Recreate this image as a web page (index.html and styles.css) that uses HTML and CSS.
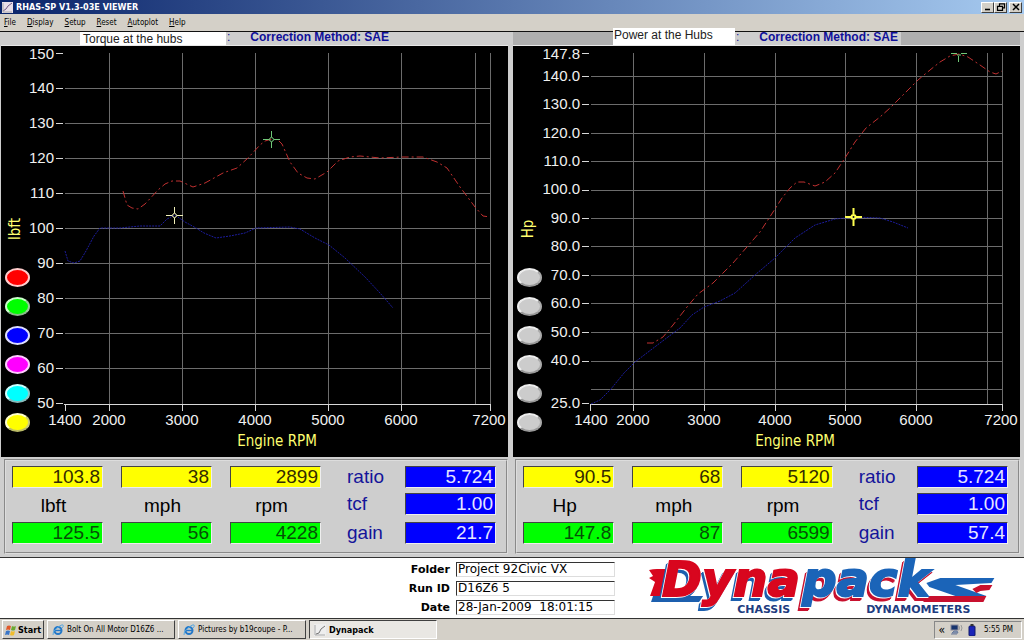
FILE: index.html
```html
<!DOCTYPE html>
<html lang="en">
<head>
<meta charset="utf-8">
<title>RHAS-SP V1.3-03E VIEWER</title>
<link rel="stylesheet" href="styles.css">
</head>
<body>
<header class="titlebar">
  <svg class="app-icon" width="11" height="11" viewBox="0 0 11 11" aria-hidden="true"><rect width="11" height="11" fill="#e9dfe9"/><path d="M1 9l3-2 2-3 4-3" stroke="#765a86" fill="none"/><path d="M1 1v9h9" stroke="#aaa" fill="none"/></svg>
  <h1 class="title">RHAS-SP V1.3-03E VIEWER</h1>
  <button class="win-btn" aria-label="Minimize"><svg width="10" height="8" viewBox="0 0 10 8"><path d="M2 6.5h5" stroke="#000" stroke-width="1.6"/></svg></button>
  <button class="win-btn" aria-label="Restore"><svg width="10" height="8" viewBox="0 0 10 8"><path d="M3.5 3V.8h5v4H7M1.500 3.300h5v4h-5z" stroke="#000" stroke-width="1.200" fill="none"/></svg></button>
  <button class="win-btn win-close" aria-label="Close"><svg width="10" height="8" viewBox="0 0 10 8"><path d="M2 1l6 6M8 1L2 7" stroke="#000" stroke-width="1.500"/></svg></button>
</header>
<nav class="menubar">
  <button class="menu"><u>F</u>ile</button>
  <button class="menu"><u>D</u>isplay</button>
  <button class="menu"><u>S</u>etup</button>
  <button class="menu"><u>R</u>eset</button>
  <button class="menu"><u>A</u>utoplot</button>
  <button class="menu"><u>H</u>elp</button>
</nav>

<main class="panels">
  <section class="panel">
    <div class="panel-head">
      <h2 class="caption">Torque at the hubs</h2>
      <p class="method"><span>:</span><strong>Correction Method: SAE</strong></p>
    </div>
    <div class="chart">
      <svg class="plot" viewBox="1 46 507 411" role="img" aria-label="Torque in lbft against engine RPM">
        <path class="grid" d="M109.500 53V404M182.500 53V404M255.500 53V404M328.500 53V404M401.500 53V404M475.500 53V404M490.500 53V404M65 88.500H490M65 123.500H490M65 158.500H490M65 193.500H490M65 228.500H490M65 263.500H490M65 298.500H490M65 333.500H490M65 368.500H490"/>
        <path class="axis" d="M64 404.500H491M65.500 404v7M109.500 404v7M182.500 404v7M255.500 404v7M328.500 404v7M401.500 404v7M490.500 404v7M56 53.500h7M56 88.500h7M56 123.500h7M56 158.500h7M56 193.500h7M56 228.500h7M56 263.500h7M56 298.500h7M56 333.500h7M56 368.500h7M56 403.500h7"/>
        <g class="ticks ticks-y">
          <text x="54" y="59">150</text><text x="54" y="93">140</text><text x="54" y="128">130</text><text x="54" y="163">120</text><text x="54" y="198">110</text><text x="54" y="233">100</text><text x="54" y="268">90</text><text x="54" y="303">80</text><text x="54" y="338">70</text><text x="54" y="373">60</text><text x="54" y="408">50</text>
        </g>
        <g class="ticks ticks-x">
          <text x="65" y="425">1400</text><text x="109" y="425">2000</text><text x="182" y="425">3000</text><text x="255" y="425">4000</text><text x="328" y="425">5000</text><text x="401" y="425">6000</text><text x="489" y="425">7200</text>
        </g>
        <text class="axis-name" x="277" y="446">Engine RPM</text>
        <text class="axis-name" transform="translate(20 229) rotate(-90)">lbft</text>
        <polyline class="run-blue" points="65,251 68,261 74,263 80,261 86,251 94,236 100,228 120,228 140,226 160,226 167,219 175,215 185,222 196,228 204,233 216,238 230,236 245,233 256,228 290,227 300,229 315,238 329,245 345,258 365,277 380,293 393,308"/>
        <polyline class="run-red" points="123,191 127,205 132,208 138,209 145,204 158,190 165,184 172,181 180,181 193,187 205,183 223,173 237,168 248,158 260,145 265,141 272,139 278,140 282,144 290,162 298,173 307,178 315,179 327,172 338,161 350,157 360,156 380,158 402,157 423,157 437,162 447,168 460,187 475,207 483,216 490,217"/>
        <g class="mark-green"><circle cx="271.500" cy="139.500" r="2"/><path d="M263 139.500h6M274 139.500h6M271.500 131v6M271.500 142v6"/></g>
        <g class="mark-pale"><circle cx="174.500" cy="215.500" r="2"/><path d="M166 215.500h6M177 215.500h6M174.500 207v6M174.500 218v6"/></g>
      </svg>
      <div class="runs">
        <button class="run red" aria-label="Run 1"></button>
        <button class="run green" aria-label="Run 2"></button>
        <button class="run blue" aria-label="Run 3"></button>
        <button class="run magenta" aria-label="Run 4"></button>
        <button class="run cyan" aria-label="Run 5"></button>
        <button class="run yellow" aria-label="Run 6"></button>
      </div>
    </div>
    <div class="readout">
      <input class="val v-yellow" id="t1" value="103.8" readonly>
      <input class="val v-yellow" id="t2" value="38" readonly>
      <input class="val v-yellow" id="t3" value="2899" readonly>
      <label class="side" for="t4">ratio</label>
      <input class="val v-blue" id="t4" value="5.724" readonly>
      <label class="unit" for="t1">lbft</label>
      <label class="unit" for="t2">mph</label>
      <label class="unit" for="t3">rpm</label>
      <label class="side" for="t5">tcf</label>
      <input class="val v-blue" id="t5" value="1.00" readonly>
      <input class="val v-green" aria-label="Peak lbft" value="125.5" readonly>
      <input class="val v-green" aria-label="Peak mph" value="56" readonly>
      <input class="val v-green" aria-label="Peak rpm" value="4228" readonly>
      <label class="side" for="t6">gain</label>
      <input class="val v-blue" id="t6" value="21.7" readonly>
    </div>
  </section>

  <section class="panel panel-power">
    <div class="panel-head">
      <h2 class="caption">Power at the Hubs</h2>
      <p class="method"><span>:</span><strong>Correction Method: SAE</strong></p>
    </div>
    <div class="chart">
      <svg class="plot" viewBox="513 46 507 411" role="img" aria-label="Power in Hp against engine RPM">
        <path class="grid" d="M633.500 53V404M704.500 53V404M775.500 53V404M845.500 53V404M916.500 53V404M987.500 53V404M1002.500 53V404M591 76.500H1002M591 104.500H1002M591 133.500H1002M591 161.500H1002M591 190.500H1002M591 218.500H1002M591 246.500H1002M591 275.500H1002M591 303.500H1002M591 332.500H1002M591 361.500H1002M591 389.500H1002"/>
        <path class="axis" d="M590 404.500H1003M590.500 404v7M633.500 404v7M704.500 404v7M775.500 404v7M845.500 404v7M916.500 404v7M1002.500 404v7M582 53.500h7M582 76.500h7M582 104.500h7M582 133.500h7M582 161.500h7M582 190.500h7M582 218.500h7M582 246.500h7M582 275.500h7M582 303.500h7M582 332.500h7M582 361.500h7M582 403.500h7"/>
        <g class="ticks ticks-y">
          <text x="580" y="59">147.8</text><text x="580" y="81">140.0</text><text x="580" y="109">130.0</text><text x="580" y="138">120.0</text><text x="580" y="166">110.0</text><text x="580" y="194">100.0</text><text x="580" y="223">90.0</text><text x="580" y="251">80.0</text><text x="580" y="280">70.0</text><text x="580" y="308">60.0</text><text x="580" y="337">50.0</text><text x="580" y="365">40.0</text><text x="580" y="408">25.0</text>
        </g>
        <g class="ticks ticks-x">
          <text x="591" y="425">1400</text><text x="633" y="425">2000</text><text x="704" y="425">3000</text><text x="775" y="425">4000</text><text x="845" y="425">5000</text><text x="916" y="425">6000</text><text x="1001" y="425">7200</text>
        </g>
        <text class="axis-name" x="795" y="446">Engine RPM</text>
        <text class="axis-name" transform="translate(533 229) rotate(-90)">Hp</text>
        <polyline class="run-blue" points="591,404 600,400 611,389 624,373 635,362 660,343 680,328 692,315 704,307 720,301 735,293 755,275 775,258 795,238 815,225 835,219 855,217 880,218 893,222 908,228"/>
        <polyline class="run-red" points="647,343 653,343 663,337 673,325 687,307 698,294 713,283 733,263 760,232 775,209 782,198 790,188 797,182 804,182 815,186 825,182 835,173 845,158 855,142 866,128 880,117 890,108 905,93 918,80 930,70 940,62 950,56 959,54 968,57 980,65 990,72 996,74 1002,71"/>
        <g class="mark-yellow"><circle cx="853.500" cy="217" r="2"/><path d="M845 217h6M856 217h6M853.500 208v6M853.500 220v6"/></g>
        <path class="mark-green" d="M951 53.500h6M961 53.500h6M957 55h4M958.500 56v6"/>
      </svg>
      <div class="runs">
        <button class="run off" aria-label="Run 1"></button>
        <button class="run off" aria-label="Run 2"></button>
        <button class="run off" aria-label="Run 3"></button>
        <button class="run off" aria-label="Run 4"></button>
        <button class="run off" aria-label="Run 5"></button>
        <button class="run off" aria-label="Run 6"></button>
      </div>
    </div>
    <div class="readout">
      <input class="val v-yellow" id="p1" value="90.5" readonly>
      <input class="val v-yellow" id="p2" value="68" readonly>
      <input class="val v-yellow" id="p3" value="5120" readonly>
      <label class="side" for="p4">ratio</label>
      <input class="val v-blue" id="p4" value="5.724" readonly>
      <label class="unit" for="p1">Hp</label>
      <label class="unit" for="p2">mph</label>
      <label class="unit" for="p3">rpm</label>
      <label class="side" for="p5">tcf</label>
      <input class="val v-blue" id="p5" value="1.00" readonly>
      <input class="val v-green" aria-label="Peak Hp" value="147.8" readonly>
      <input class="val v-green" aria-label="Peak mph" value="87" readonly>
      <input class="val v-green" aria-label="Peak rpm" value="6599" readonly>
      <label class="side" for="p6">gain</label>
      <input class="val v-blue" id="p6" value="57.4" readonly>
    </div>
  </section>
</main>

<section class="info">
  <form class="run-form">
    <label for="folder">Folder</label><input id="folder" value="Project 92Civic VX">
    <label for="runid">Run ID</label><input id="runid" value="D16Z6 5">
    <label for="date">Date</label><input id="date" value="28-Jan-2009  18:01:15">
  </form>
  <svg class="logo" viewBox="640 557 384 60" role="img" aria-label="Dynapack Chassis Dynamometers">
    <path fill="#1c5fae" d="M653 595h50l-4 6h-48z"/>
    <path fill="#c8102e" d="M925 595h61l-3 6h-60z"/>
    <path fill="#d8061e" d="M649 569q4-1 8-1h18l-7 27h-18l5-14-6-4 4-2z"/>
    <path fill="#1b64b8" d="M926 582l14-5h54l-3 5-36 2 31 11h-31l-26-9z"/>
    <path fill="#c8102e" d="M972 588l8-4h12l-3 5-9 1-4 2z"/>
    <text class="logo-word word-red" x="662" y="595">Dyna</text>
    <text class="logo-word word-blue" x="802" y="595">pack</text>
    <text class="logo-sub" x="737" y="612">CHASSIS</text>
    <text class="logo-sub" x="866" y="612">DYNAMOMETERS</text>
  </svg>
</section>

<footer class="taskbar">
  <button class="task start"><svg width="12" height="12" viewBox="0 0 12 12"><path fill="#e2582a" d="M2 2q2-1 4 0L5 6Q3 5 1 6z"/><path fill="#6aa832" d="M7 2q2 1 4 0l-1 4Q8 7 6 6z"/><path fill="#3a76c8" d="M1 7q2-1 4 0l-1 4q-2-1-4 0z"/><path fill="#f0bd2c" d="M6 7q2 1 4 0l-1 4q-2 1-4 0z"/></svg>Start</button>
  <button class="task"><svg width="12" height="12" viewBox="0 0 12 12"><circle cx="6" cy="6.500" r="3.500" fill="none" stroke="#2478c8" stroke-width="2"/><path d="M3 6.500h7" stroke="#2478c8" stroke-width="1.500"/><path d="M1 11Q0 8 5 4T11 1q1 1-1 3" fill="none" stroke="#58a8e0"/></svg><span>Bolt On All Motor D16Z6 ...</span></button>
  <button class="task"><svg width="12" height="12" viewBox="0 0 12 12"><circle cx="6" cy="6.500" r="3.500" fill="none" stroke="#2478c8" stroke-width="2"/><path d="M3 6.500h7" stroke="#2478c8" stroke-width="1.500"/><path d="M1 11Q0 8 5 4T11 1q1 1-1 3" fill="none" stroke="#58a8e0"/></svg><span>Pictures by b19coupe - P...</span></button>
  <button class="task active"><svg width="12" height="12" viewBox="0 0 12 12"><rect width="12" height="12" fill="#eee"/><path d="M1 1v10h10" stroke="#aaa" fill="none"/><path d="M2 10l3-1 2-4 4-3" stroke="#777" fill="none"/></svg><span>Dynapack</span></button>
  <div class="tray">
    <button class="chevron" aria-label="Show hidden icons">«</button>
    <svg width="13" height="12" viewBox="0 0 13 12"><rect x="1" y="1" width="7" height="5" fill="#17346e" stroke="#889"/><path d="M4 7h3l1 2H2zM1 10h6" stroke="#68799a" fill="#8fa0b8"/><path d="M9 2q1 2 0 4M11 1q2 3 0 6" fill="none" stroke="#999"/></svg>
    <svg width="8" height="12" viewBox="0 0 8 12"><rect x="1" y="2" width="6" height="10" rx="1" fill="#1b25b8" stroke="#111a68"/><path d="M2.500 1h3" stroke="#333" stroke-width="2"/></svg>
    <time class="clock">5:55 PM</time>
  </div>
</footer>
</body>
</html>
```
FILE: styles.css
```css
* { box-sizing: border-box; }

body {
  margin: 0;
  min-height: 100vh;
  display: flex;
  flex-direction: column;
  background: #d4d0c8;
  color: #000;
  font-family: "DejaVu Sans Condensed", "DejaVu Sans", sans-serif;
  font-size: 8px;
}

button, input { font: inherit; color: inherit; margin: 0; padding: 0; border: 0; border-radius: 0; }
h1, h2, p { margin: 0; }
svg { display: block; flex: none; }

.titlebar {
  display: flex;
  align-items: center;
  height: 14px;
  padding: 0 2px;
  color: #fff;
  background: linear-gradient(90deg, #0a246a, #a6caf0);
}
.title { flex: 1; margin-left: 3px; font-size: 9px; line-height: 14px; font-weight: bold; }
.win-btn {
  display: grid;
  place-items: center;
  width: 13px;
  height: 11px;
  background: #d4d0c8;
  border: 1px solid;
  border-color: #fff #404040 #404040 #fff;
}
.win-close { margin-left: 2px; }

.menubar { display: flex; gap: 11px; height: 18px; padding: 0 4px; border-bottom: 1px solid #111; }
.menu { background: none; line-height: 16px; }

.panels {
  display: grid;
  grid-template-columns: 1fr 1fr;
  gap: 5px;
  padding: 0 4px 0 1px;
  background: #cecece;
}
.panel { min-width: 0; }
.panel-head { display: flex; height: 14px; padding-left: 79px; background: #cecece; border-bottom: 1px solid #e8e8e8; }
.caption {
  width: 146px;
  padding-left: 3px;
  background: #fff;
  color: #222;
  font: 12px/14px "Liberation Sans", Arial, sans-serif;
}
.method { display: flex; gap: 20px; padding: 0 3px 0 1px; background: #cecece; color: #10109a; font: 12px/11px "Liberation Sans", Arial, sans-serif; }
.panel-power .panel-head { padding-left: 100px; background: #afafaf; }
.panel-power .caption { width: 122px; height: 17px; margin-top: -4px; padding-left: 1px; }

.chart { position: relative; background: #000; }
.plot { width: 100%; height: auto; }
.grid { stroke: #6c6c6c; fill: none; }
.axis { stroke: #d8d8d8; fill: none; }
.ticks { fill: #f0f0f0; font: 15px "Liberation Sans", Arial, sans-serif; }
.ticks-y { text-anchor: end; }
.ticks-x { text-anchor: middle; }
.axis-name { fill: #ffff70; text-anchor: middle; font-size: 15px; }
.run-red { fill: none; stroke: #c03030; stroke-dasharray: 7 3 2 3; }
.run-blue { fill: none; stroke: #1c1c9c; stroke-dasharray: 2 1; }
.mark-green { fill: none; stroke: #70c878; }
.mark-pale { fill: none; stroke: #f0f0b8; }
.mark-yellow { fill: none; stroke: #ffff50; stroke-width: 2; }

.runs { position: absolute; left: 4px; bottom: 25px; display: flex; flex-direction: column; gap: 10px; }
.run { width: 25px; height: 19px; border: 2px solid; border-color: #fff #ddd #aaa #fff; border-radius: 50%; }
.red { background: #f00; border-color: #fcc; }
.green { background: #0f0; border-color: #cfc #9c9 #8b8 #cfc; }
.blue { background: #00f; border-color: #ddf; }
.magenta { background: #f0f; border-color: #fcf; }
.cyan { background: #0ff; border-color: #cff #8cc #8bb #cff; }
.yellow { background: #ff0; border-color: #ffc #cc7 #bb6 #ffc; }
.off { background: #ccc; border-color: #eee #aaa #999 #eee; }

.readout {
  display: grid;
  grid-template-columns: 91fr 91fr 91fr 48fr 91fr;
  gap: 5px 18px;
  margin: 2px 0 3px 3px;
  padding: 5px 10px 8px 6px;
  border: 2px groove #ddd;
  font: 19px/22px "Liberation Sans", Arial, sans-serif;
}
.panel-power .readout { margin-left: 2px; }
.val {
  width: 100%;
  min-width: 0;
  height: 22px;
  padding: 0 2px;
  line-height: 20px;
  text-align: right;
  border: 1px solid;
  border-color: #444 #eee #eee #444;
}
.v-yellow { background: #ff0; color: #332b00; }
.v-green { background: #0f0; color: #064f06; }
.v-blue { background: #00f; color: #e6e6ff; }
.unit { padding: 2px 8px 0 0; text-align: center; }
.side { padding-left: 8px; color: #14149a; }

.info {
  display: grid;
  grid-template-columns: 615fr 409fr;
  border-top: 1px solid #333;
  border-bottom: 1px solid #333;
  background: #fff;
}
.run-form {
  display: grid;
  grid-template-columns: auto 159px;
  gap: 4px 6px;
  justify-self: end;
  align-content: center;
  align-items: center;
  font: 12px/15px "DejaVu Sans", sans-serif;
}
.run-form label { text-align: right; font-size: 11px; font-weight: bold; }
.run-form input {
  width: 100%;
  height: 15px;
  padding: 0 1px;
  line-height: 13px;
  background: #fff;
  border: 1px solid;
  border-color: #333 #ddd #ddd #333;
  white-space: pre;
}
.logo { justify-self: end; width: 94%; height: auto; }
.logo-word { font: italic bold 48px "DejaVu Sans", sans-serif; stroke-width: 2px; }
.word-red { fill: #d8061e; stroke: #d8061e; filter: drop-shadow(-1px 1px 0 #fff) drop-shadow(-2px 3px 0 #1c5fae); }
.word-blue { fill: #1b64b8; stroke: #1b64b8; filter: drop-shadow(-1px 1px 0 #fff) drop-shadow(-2px 3px 0 #c8102e); }
.logo-sub { fill: #203c80; font: bold 11px "DejaVu Sans", sans-serif; stroke: #fff; stroke-width: 2px; paint-order: stroke; }

.taskbar { display: flex; flex: 1; align-items: center; gap: 3px; padding: 0 2px; }
.task {
  display: flex;
  align-items: center;
  gap: 3px;
  width: 128px;
  height: 19px;
  padding: 0 4px;
  background: #d4d0c8;
  border: 1px solid;
  border-color: #fff #404040 #404040 #fff;
  white-space: nowrap;
}
.start { width: 42px; padding: 0 2px; gap: 1px; font-size: 9px; font-weight: bold; }
.active { background: #e9e7e3; border-color: #404040 #fff #fff #404040; font-size: 9px; font-weight: bold; }
.tray {
  display: flex;
  align-items: center;
  gap: 5px;
  height: 18px;
  margin-left: auto;
  padding: 0 8px 0 3px;
  border: 1px solid;
  border-color: #888 #fff #fff #888;
}
.chevron { background: none; font-size: 12px; line-height: 12px; }
.clock { margin-left: 3px; }
```
